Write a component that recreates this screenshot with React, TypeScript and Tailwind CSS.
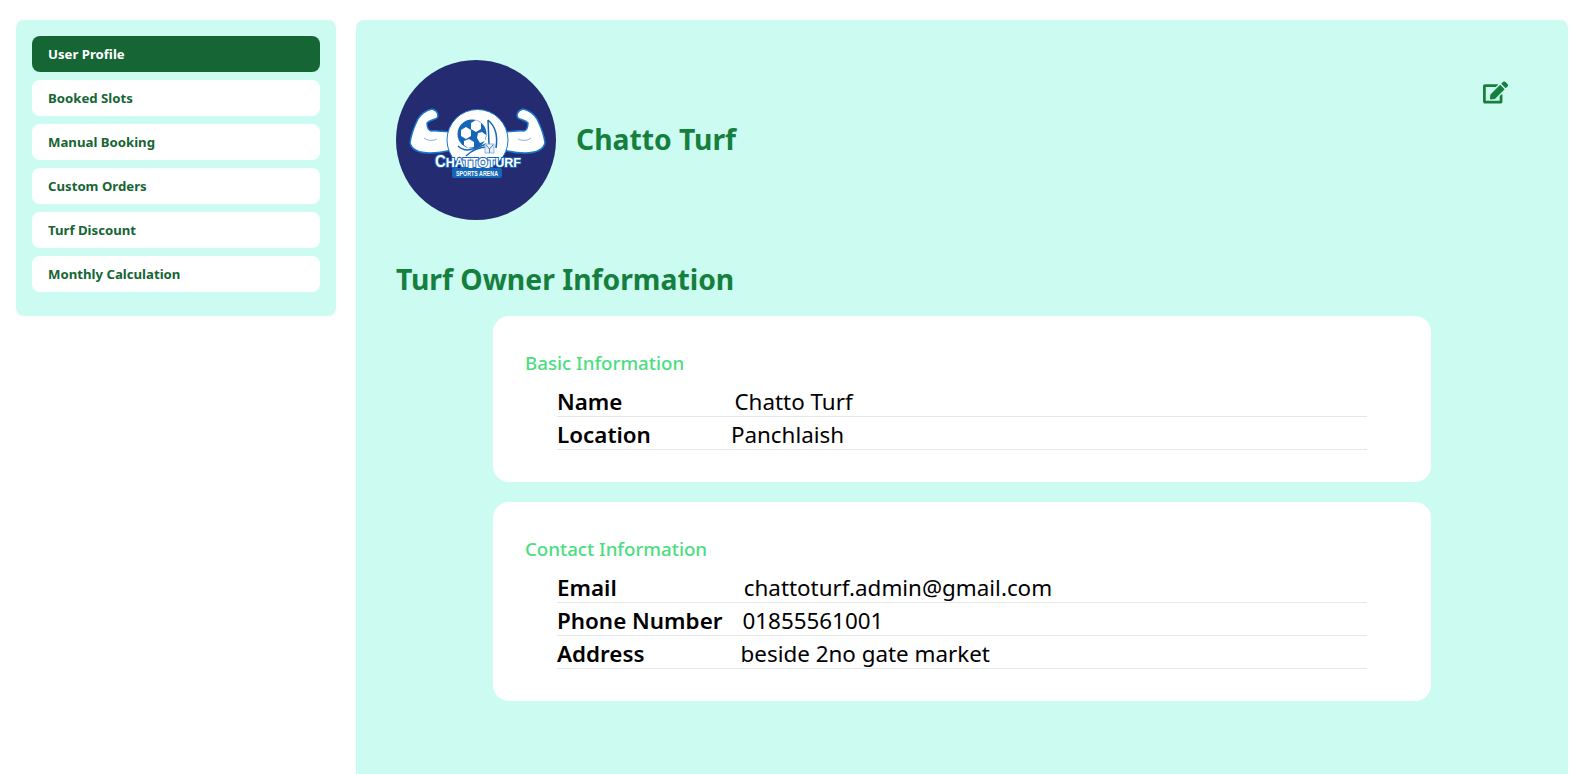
import React from 'react';
import { FaEdit } from 'react-icons/fa';

const menuItems = ['User Profile', 'Booked Slots', 'Manual Booking', 'Custom Orders', 'Turf Discount', 'Monthly Calculation'];

const Arm: React.FC = () => (
    <g>
        <path d="M36 49 C30 50 24 55 22 59 C19 65 15 75 14 83 C16 90 24 93 34 93 C42 93 48 92 56 90 L56 72 C48 72 40 70 35 71 C32 70 31 66 31 63 C34 60 38 60 41 58 C43 55 42 51 36 49 Z" fill="#fff" stroke="#1a78d0" strokeWidth="1.5" />
        <path d="M28 78 C32 81 37 81 41 79" fill="none" stroke="#7fb2e5" strokeWidth="1" />
    </g>
);

const Logo: React.FC = () => (
    <svg viewBox="0 0 160 160" className="w-40 h-40 block">
        <circle cx="80" cy="80" r="80" fill="#252b70" />
        <Arm />
        <g transform="matrix(-1 0 0 1 163 0)">
            <Arm />
        </g>
        {/* ring and ball */}
        <circle cx="81.5" cy="80" r="30.5" fill="#fff" stroke="#1a78d0" strokeWidth="1" />
        <circle cx="80" cy="77" r="21" fill="#fff" />
        <circle cx="76" cy="74" r="14.5" fill="#1565b8" />
        <polygon points="80,60 85,63 85,69 80,72 75,69 75,63" fill="#fff" />
        <polygon points="70,67 75,70 75,76 70,79 65,76 65,70" fill="#fff" />
        <polygon points="86,72 90,75 89,81 84,83 81,78 82,73" fill="#fff" />
        <polygon points="73,79 78,82 78,87 72,88 68,85 68,81" fill="#fff" />
        {/* net and swoosh */}
        <path d="M92 60 C99 66 102 76 100 88 M92 60 L93 84" fill="none" stroke="#1565b8" strokeWidth="1.5" />
        <path d="M62 86 C70 94 80 88 90 84" fill="none" stroke="#1565b8" strokeWidth="1.5" />
        <path d="M70 96 C76 90 84 87 92 87" fill="none" stroke="#1565b8" strokeWidth="1.5" />
        <rect x="89" y="84" width="9" height="9" fill="#e8f0fa" stroke="#7fa6d6" strokeWidth="0.8" />
        <path d="M90 85 L93.5 89 L97 85 M93.5 89 L93.5 93" fill="none" stroke="#1565b8" strokeWidth="0.8" />
        {/* wordmark */}
        <text x="82" y="107" textAnchor="middle" fontFamily="'Liberation Sans', sans-serif" fontWeight="700" fontSize="13.5" textLength="86" lengthAdjust="spacingAndGlyphs" fill="#fff" stroke="#1565b8" strokeWidth="2" paintOrder="stroke">
            <tspan fontSize="16">C</tspan>HATTOTURF
        </text>
        <rect x="56" y="108" width="50" height="10" rx="2" fill="#1565b8" />
        <text x="81" y="115.8" textAnchor="middle" fontFamily="'Liberation Sans', sans-serif" fontWeight="700" fontSize="6.5" textLength="42" lengthAdjust="spacingAndGlyphs" fill="#fff">SPORTS ARENA</text>
    </svg>
);

const InfoRow: React.FC<{ label: string; value: string; valueClass: string }> = ({ label, value, valueClass }) => (
    <div className="flex border-b border-gray-200 h-[33px] leading-9 text-[22.4px] text-black">
        <span className="font-semibold">{label}</span>
        <span className={valueClass}>{value}</span>
    </div>
);

const App: React.FC = () => {
    return (
        <div className="h-screen overflow-hidden bg-white flex gap-5 pl-4 pr-[21px] pt-5 font-['Noto_Sans',sans-serif]">
            <aside className="w-80 shrink-0 self-start bg-[#ccfbf1] rounded-lg pt-4 pb-6 px-4 flex flex-col gap-2">
                {menuItems.map((item, i) => (
                    <button
                        key={item}
                        className={`h-9 rounded-lg px-4 pt-0.5 text-left text-[13.2px] font-bold ${i === 0 ? 'bg-[#166534] text-white' : 'bg-white text-[#166534]'}`}
                    >
                        {item}
                    </button>
                ))}
            </aside>

            <main className="flex-1 bg-[#ccfbf1] rounded-t-lg p-10">
                <div className="flex items-center justify-between">
                    <div className="flex items-center gap-5">
                        <Logo />
                        <h1 className="text-[28.3px] font-bold text-[#15803d] -mt-0.5">Chatto Turf</h1>
                    </div>
                    <button className="self-start mt-5 mr-5 text-[#15803d]">
                        <FaEdit size={25} />
                    </button>
                </div>

                <h2 className="mt-10 h-9 leading-9 pt-px text-[28.3px] font-bold text-[#15803d]">Turf Owner Information</h2>

                <div className="mt-5 ml-[97px] w-[938px] flex flex-col gap-5">
                    <section className="bg-white rounded-2xl px-8 pt-8 pb-8 h-[166px]">
                        <h3 className="h-7 leading-[30px] text-[18.7px] font-medium text-[#4ade80]">Basic Information</h3>
                        <div className="mt-2 mx-8">
                            <InfoRow label="Name" value="Chatto Turf" valueClass="ml-[112px]" />
                            <InfoRow label="Location" value="Panchlaish" valueClass="ml-20" />
                        </div>
                    </section>
                    <section className="bg-white rounded-2xl px-8 pt-8 pb-8 h-[199px]">
                        <h3 className="h-7 leading-[30px] text-[18.7px] font-medium text-[#4ade80]">Contact Information</h3>
                        <div className="mt-2 mx-8">
                            <InfoRow label="Email" value="chattoturf.admin@gmail.com" valueClass="ml-[127px]" />
                            <InfoRow label="Phone Number" value="01855561001" valueClass="ml-5" />
                            <InfoRow label="Address" value="beside 2no gate market" valueClass="ml-24" />
                        </div>
                    </section>
                </div>
            </main>
        </div>
    );
};

export default App;
